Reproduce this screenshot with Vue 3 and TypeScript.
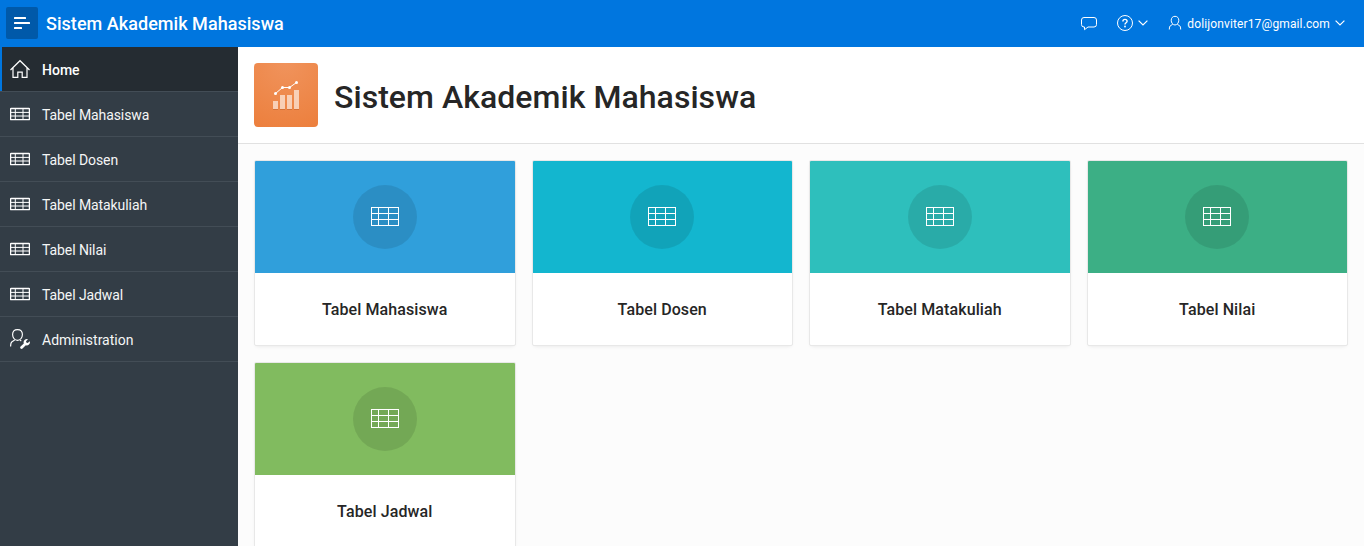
<script setup lang="ts">
import { ref } from 'vue'

type IconName = 'home' | 'table' | 'admin'
interface NavItem { label: string; icon: IconName }
interface Card { label: string; color: string }

const title = 'Sistem Akademik Mahasiswa'
const active = ref('Home')

const nav: NavItem[] = [
  { label: 'Home', icon: 'home' },
  { label: 'Tabel Mahasiswa', icon: 'table' },
  { label: 'Tabel Dosen', icon: 'table' },
  { label: 'Tabel Matakuliah', icon: 'table' },
  { label: 'Tabel Nilai', icon: 'table' },
  { label: 'Tabel Jadwal', icon: 'table' },
  { label: 'Administration', icon: 'admin' },
]

const cards: Card[] = [
  { label: 'Tabel Mahasiswa', color: '#309fdb' },
  { label: 'Tabel Dosen', color: '#13b6cf' },
  { label: 'Tabel Matakuliah', color: '#2ebfbc' },
  { label: 'Tabel Nilai', color: '#3caf85' },
  { label: 'Tabel Jadwal', color: '#81bb5f' },
]
</script>

<template>
  <div class="app">
    <header class="topbar">
      <button class="menu-btn" aria-label="Menu">
        <svg width="16" height="12" viewBox="0 0 16 12" fill="#fff">
          <rect width="12" height="2" rx=".5" /><rect y="5" width="16" height="2" rx=".5" /><rect y="10" width="8" height="2" rx=".5" />
        </svg>
      </button>
      <span class="brand">{{ title }}</span>
      <div class="tools">
        <svg class="chat" width="18" height="16" viewBox="0 0 18 16" fill="none" stroke="#fff">
          <path d="M4 2.500h10Q16.500 2.500 16.500 5v4.500q0 2.500-2.500 2.500H8L4.500 14.700V12H4Q1.500 12 1.500 9.500V5Q1.500 2.500 4 2.500z" />
        </svg>
        <div class="help">
          <svg width="16" height="16" viewBox="0 0 16 16" fill="none" stroke="#fff">
            <circle cx="8" cy="8" r="7.500" />
            <path d="M5.900 6.400q0-2 2.100-2t2.100 1.800c0 1.500-2.100 1.500-2.100 3.200" stroke-width="1.400" />
            <circle cx="8" cy="11.500" r=".9" fill="#fff" stroke="none" />
          </svg>
          <svg class="chev" width="10" height="6" viewBox="0 0 10 6" fill="none" stroke="#fff" stroke-width="1.200"><path d="M.6.600L5 4.900 9.400.600" /></svg>
        </div>
        <div class="user">
          <svg width="14" height="16" viewBox="0 0 14 16" fill="none" stroke="#fff">
            <path d="M7 1.300c2.500 0 3.800 1.800 3.800 4S9.300 10 7 10 3.200 7.500 3.200 5.300 4.500 1.300 7 1.300zM4.700 9.300L2.200 10.900Q1.300 11.500 1.300 14.500M9.300 9.300l2.500 1.600q.9.600.9 3.600" />
          </svg>
          <span class="mail">dolijonviter17@gmail.com</span>
          <svg class="chev" width="10" height="6" viewBox="0 0 10 6" fill="none" stroke="#fff" stroke-width="1.200"><path d="M.6.600L5 4.900 9.400.600" /></svg>
        </div>
      </div>
    </header>

    <div class="body">
      <nav class="side">
        <a v-for="item in nav" :key="item.label" class="item" :class="{ current: item.label === active, tabular: item.icon === 'table' }" @click="active = item.label">
          <svg v-if="item.icon === 'home'" class="icon" width="20" height="20" viewBox="0 0 20 20" fill="none" stroke="#fff" stroke-width="1.200">
            <path d="M.5 11L10 1.700l9.500 9.300M3 9v9.400h4.800v-5.200h4.400v5.200H17V9" />
          </svg>
          <svg v-else-if="item.icon === 'table'" class="icon" width="20" height="20" viewBox="0 0 20 20" fill="none" stroke="#fff">
            <rect x=".6" y="4.500" width="18.800" height="11.200" rx=".5" stroke-width="1.300" /><path d="M5.300 5v11M13 5v11M1 8.400h18M1 12h18" />
          </svg>
          <svg v-else class="icon" width="20" height="20" viewBox="0 0 20 20" fill="none" stroke="#fff" stroke-width="1.150">
            <path d="M7.500.600c3.200 0 4.900 2.300 4.900 5s-1.900 5.800-4.900 5.800-4.900-3.100-4.900-5.800 1.700-5 4.900-5zM4.700 11L2 12.700Q.6 13.600.6 17.500M10 11.100l1.300.9" />
            <path d="M18 10.200a3.300 3.300 0 0 0-4.200 4.200L10.600 17.600a1.300 1.300 0 0 0 1.900 1.900l3.300-3.200a3.300 3.300 0 0 0 4-4.100l-2.100 1.700-1.400-.3-.3-1.400z" fill="#fff" stroke="none" />
          </svg>
          <span>{{ item.label }}</span>
        </a>
      </nav>

      <main class="main">
        <section class="hero">
          <div class="logo">
            <svg width="28" height="30" viewBox="0 0 28 30">
              <g fill="#fff" fill-opacity=".6"><path d="M1 21h5v8H1zM8 15h5v14H8zM15 15h5v14h-5zM22 10h5v19h-5z" /></g>
              <path d="M1 29.500h5M8 29.500h5M15 29.500h5M22 29.500h5" stroke="#a34e1c" stroke-opacity=".35" />
              <path d="M3.500 13.500l7-6h7l7-5" fill="none" stroke="#fff" />
              <g fill="#fff"><circle cx="3.500" cy="13.500" r="1.500" /><circle cx="10.500" cy="7.500" r="1.500" /><circle cx="17.500" cy="7.500" r="1.500" /><circle cx="24.500" cy="2.500" r="1.500" /></g>
            </svg>
          </div>
          <h1>{{ title }}</h1>
        </section>
        <section class="cards">
          <article v-for="card in cards" :key="card.label" class="card">
            <div class="cover" :style="{ backgroundColor: card.color }">
              <div class="disc">
                <svg width="28" height="20" viewBox="0 0 28 20" fill="none" stroke="#fff" shape-rendering="crispEdges">
                  <path d="M.5.500h27v18H.500zM7.500.500v18M17.500.500v18M.5 6.500h27M.5 12.500h27" />
                </svg>
              </div>
            </div>
            <h3>{{ card.label }}</h3>
          </article>
        </section>
      </main>
    </div>
  </div>
</template>

<style>
html, body { margin: 0; overflow: hidden; }
</style>

<style scoped>
.app { height: 546px; overflow: hidden; display: flex; flex-direction: column; font-family: Roboto, "Liberation Sans", sans-serif; color: #262626; background: #fcfcfc; }
.app * { box-sizing: border-box; }
svg { display: block; flex: none; }
.topbar { flex: none; height: 47px; display: flex; align-items: center; padding: 0 19px 1px 6px; background: #0076df; color: #fff; }
.menu-btn { width: 32px; height: 32px; margin: 0; padding: 0; border: 0; border-radius: 2px; background: #0059a9; display: flex; align-items: center; justify-content: center; }
.brand { margin-left: 8px; padding-top: 1px; font-size: 18px; font-weight: 500; line-height: 24px; letter-spacing: .04px; }
.tools { margin-left: auto; display: flex; align-items: center; }
.help { display: flex; align-items: center; margin-left: 19px; }
.help .chev { margin-left: 5px; }
.user { display: flex; align-items: center; margin-left: 20px; font-size: 12px; line-height: 16px; }
.mail { margin-left: 5px; padding-top: 1px; letter-spacing: .13px; }
.user .chev { margin-left: 5px; }
.body { flex: 1; min-height: 0; display: flex; }
.side { flex: none; width: 238px; background: #333d46; }
.item { height: 45px; display: flex; align-items: center; padding-left: 10px; border-bottom: 1px solid #434d56; color: #f5f6f6; font-size: 14px; line-height: 20px; cursor: pointer; }
.item span { margin-left: 12px; padding-top: 1px; }
.tabular { letter-spacing: -.08px; }
.current { background: #252c32; box-shadow: inset 2px 0 #0076df; color: #fff; font-weight: 500; }
.main { flex: 1; min-width: 0; }
.hero { height: 97px; display: flex; align-items: center; padding: 0 16px; background: #fff; border-bottom: 1px solid #e1e1e1; }
.logo { width: 64px; height: 64px; border-radius: 4px; display: flex; align-items: center; justify-content: center; background: radial-gradient(circle at 50% 0, #f0935c, #ec7e3b 105%); }
h1 { margin: 4px 0 0 16px; font-size: 32px; line-height: 40px; font-weight: 500; letter-spacing: .05px; }
.cards { display: grid; grid-template-columns: repeat(4, 1fr); gap: 16px; padding: 16px; }
.card { height: 186px; border: 1px solid #e8e8e8; border-radius: 2px; background: #fff; box-shadow: 0 2px 4px -2px rgba(0, 0, 0, .1); overflow: hidden; }
.cover { height: 112px; display: flex; align-items: center; justify-content: center; }
.disc { width: 64px; height: 64px; border-radius: 50%; background: rgba(0, 0, 0, .1); display: flex; align-items: center; justify-content: center; }
h3 { margin: 0; height: 72px; font-size: 16px; line-height: 74px; font-weight: 500; text-align: center; letter-spacing: .1px; }
</style>
